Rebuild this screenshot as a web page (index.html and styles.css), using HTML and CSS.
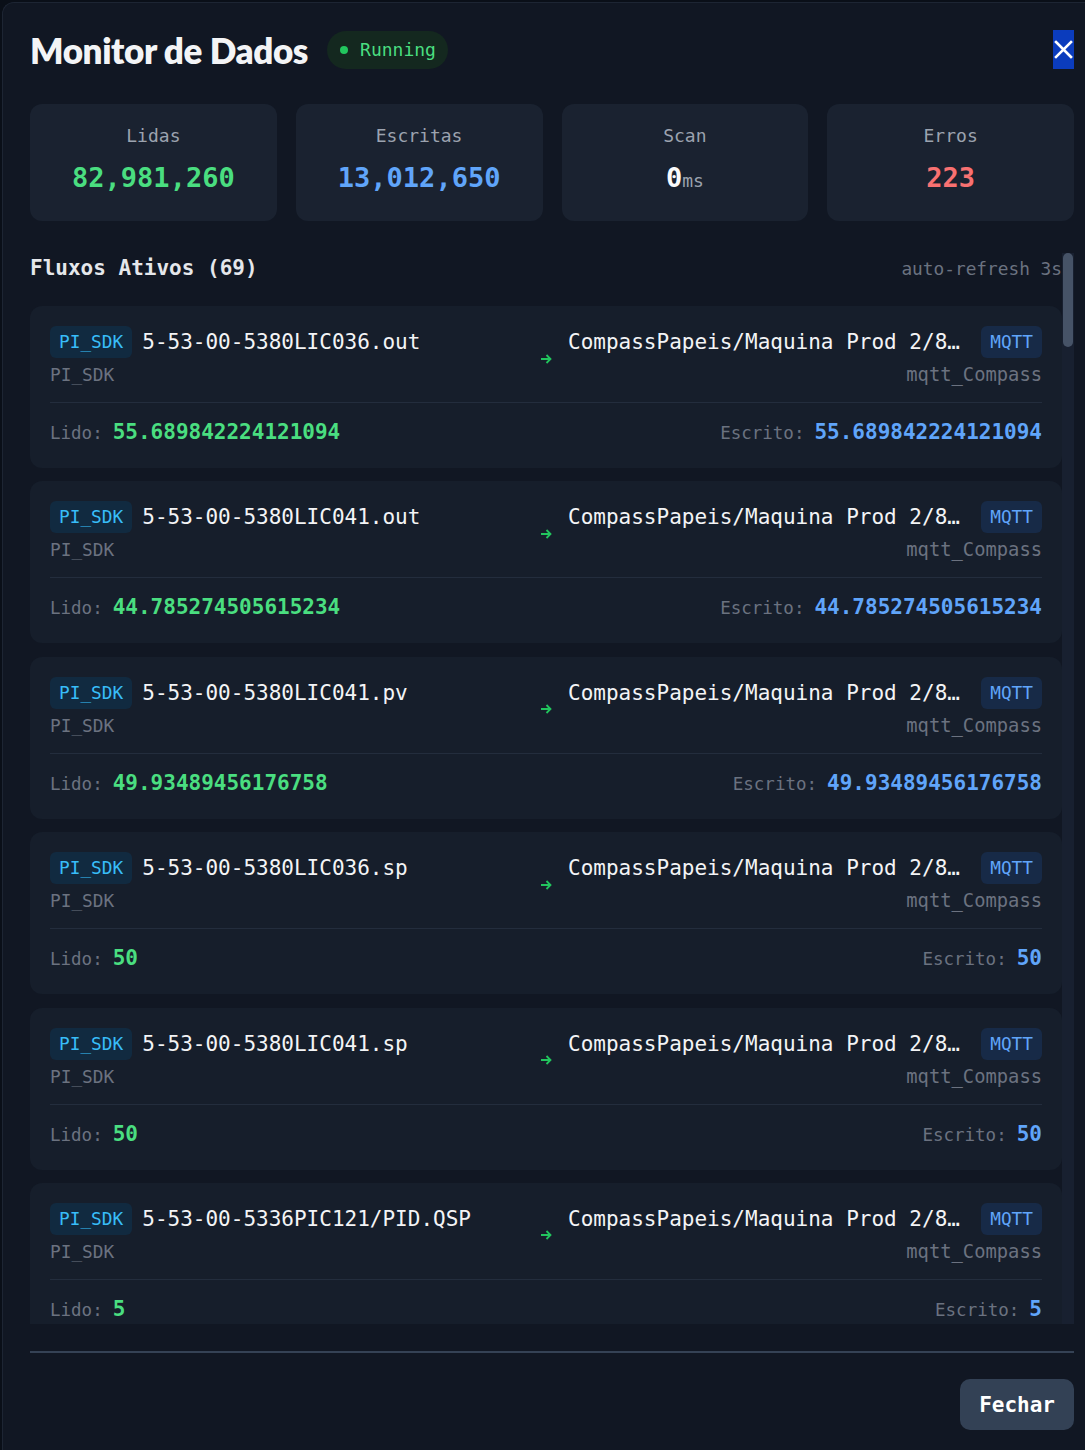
FILE: index.html
```html
<!DOCTYPE html>
<html lang="pt">
<head>
    <meta charset="UTF-8">
    <meta name="viewport" content="width=device-width, initial-scale=1.0">
    <title>Monitor de Dados</title>
    <link rel="stylesheet" href="styles.css">
</head>
<body>
    <div class="modal">
        <header class="modal-header">
            <h1>Monitor de Dados</h1>
            <span class="status"><span class="status-dot"></span>Running</span>
            <button class="close-button" aria-label="Fechar">
                <svg width="19" height="19" viewBox="0 0 19 19"><path d="M2 2 L17 17 M17 2 L2 17" stroke="#fff" stroke-width="2.6" stroke-linecap="square"/></svg>
            </button>
        </header>

        <div class="stats">
            <div class="stat">
                <p class="stat-label">Lidas</p>
                <p class="stat-value green" id="reads">82,981,260</p>
            </div>
            <div class="stat">
                <p class="stat-label">Escritas</p>
                <p class="stat-value blue" id="writes">13,012,650</p>
            </div>
            <div class="stat">
                <p class="stat-label">Scan</p>
                <p class="stat-value white" id="scan">0<span class="unit">ms</span></p>
            </div>
            <div class="stat">
                <p class="stat-label">Erros</p>
                <p class="stat-value red" id="errors">223</p>
            </div>
        </div>

        <div class="flows-area">
            <div class="flows" id="flows">
                <div class="flows-header">
                    <h2 id="flows-title">Fluxos Ativos (69)</h2>
                    <span class="refresh">auto-refresh 3s</span>
                </div>
                <div class="flow-list" id="flow-list"></div>
            </div>
            <div class="scrollbar"><div class="scroll-thumb" id="scroll-thumb"></div></div>
        </div>

        <footer class="modal-footer">
            <button class="footer-button">Fechar</button>
        </footer>
    </div>

    <script src="script.js"></script>
</body>
</html>
```

FILE: styles.css
```css
body {
    margin: 0;
    padding: 0;
    background-color: #0a0f18;
    font-family: "DejaVu Sans Mono", "Liberation Mono", monospace;
    color: #e5e7eb;
    overflow: hidden;
}

.modal {
    box-sizing: border-box;
    height: 1448px;
    margin: 2px 0 0 2px;
    padding: 27px 11px 20px 27px;
    background-color: #111723;
    border-top: 1px solid #1d2533;
    border-left: 1px solid #1d2533;
    border-radius: 12px 0 0 0;
}

.modal-header {
    display: flex;
    align-items: center;
    height: 39px;
    margin-bottom: 35px;
}

h1 {
    margin: 0;
    font-family: Lato, "Liberation Sans", sans-serif;
    font-weight: 800;
    font-size: 35px;
    letter-spacing: -0.4px;
    color: #f3f4f6;
}

.status {
    display: flex;
    align-items: center;
    gap: 12px;
    height: 38px;
    margin-left: 19px;
    padding: 0 12px 0 13px;
    border-radius: 19px;
    background-color: #14281f;
    color: #4ade80;
    font-size: 18px;
}

.status-dot {
    width: 8px;
    height: 8px;
    border-radius: 50%;
    background-color: #22c55e;
}

.close-button {
    display: flex;
    align-items: center;
    justify-content: center;
    width: 21px;
    height: 39px;
    margin-left: auto;
    padding: 0;
    border: none;
    background-color: #0b3cbd;
    cursor: pointer;
}

.stats {
    display: grid;
    grid-template-columns: repeat(4, 1fr);
    gap: 19px;
    margin-bottom: 32px;
}

.stat {
    padding: 20px 10px 22px;
    border-radius: 12px;
    background-color: #1a2230;
    text-align: center;
}

.stat-label {
    margin: 0;
    font-size: 18px;
    line-height: 24px;
    color: #9ca3af;
}

.stat-value {
    margin: 12px 0 0;
    font-size: 27px;
    line-height: 36px;
    font-weight: 700;
}

.unit {
    font-size: 18px;
    font-weight: 400;
    color: #9ca3af;
}

.green { color: #4ade80; }
.blue { color: #60a5fa; }
.red { color: #f87171; }
.white { color: #f9fafb; }

.flows-area {
    display: flex;
    height: 1071px;
}

.flows {
    flex: 1;
    min-width: 0;
    overflow-y: auto;
    scrollbar-width: none;
}

.scrollbar {
    width: 12px;
    background-color: #182030;
}

.scroll-thumb {
    height: 92px;
    margin: 0 1px;
    border-radius: 5px;
    background-color: #465367;
}

.flows-header {
    display: flex;
    justify-content: space-between;
    align-items: center;
    padding-top: 3px;
    margin-bottom: 26px;
}

h2 {
    margin: 0;
    font-size: 21px;
    line-height: 24px;
    font-weight: 700;
    color: #e5e7eb;
}

.refresh {
    font-size: 17.8px;
    color: #6b7280;
}

.flow-list {
    display: flex;
    flex-direction: column;
    gap: 13.4px;
}

.flow {
    padding: 20px 20px 22px;
    border-radius: 12px;
    background-color: #161e2b;
}

.flow-top {
    display: grid;
    grid-template-columns: 1fr auto 1fr;
    align-items: center;
    gap: 16px;
    padding-bottom: 14px;
    border-bottom: 1px solid #232d3d;
}

.end {
    min-width: 0;
}

.end-line {
    display: flex;
    align-items: center;
    gap: 10px;
    height: 32px;
}

.dst .end-line {
    justify-content: flex-end;
    gap: 20px;
}

.point {
    min-width: 0;
    overflow: hidden;
    white-space: nowrap;
    text-overflow: ellipsis;
    font-size: 21px;
    color: #f3f4f6;
}

.dst .point {
    flex: 1;
}

.tag {
    flex-shrink: 0;
    padding: 0 9px;
    border-radius: 6px;
    font-size: 17.8px;
    line-height: 32px;
}

.tag-pi {
    background-color: #112a40;
    color: #38bdf8;
}

.tag-mqtt {
    background-color: #172a47;
    color: #60a5fa;
}

.conn {
    margin-top: 4px;
    font-size: 17.8px;
    line-height: 26px;
    color: #6b7280;
}

.dst .conn {
    text-align: right;
    font-size: 18.8px;
}

.arrow {
    display: flex;
    width: 12px;
    margin-top: 3px;
}

.flow-values {
    display: flex;
    justify-content: space-between;
    height: 28px;
    margin-top: 15px;
}

.reading {
    display: flex;
    align-items: baseline;
    gap: 10px;
    height: 28px;
}

.label {
    font-size: 17.5px;
    line-height: 28px;
    color: #6b7280;
}

.value {
    font-size: 21px;
    line-height: 28px;
    font-weight: 700;
}

.modal-footer {
    display: flex;
    justify-content: flex-end;
    margin-top: 27px;
    padding-top: 26px;
    border-top: 2px solid #354255;
}

.footer-button {
    height: 51px;
    padding: 0 19px;
    border: none;
    border-radius: 10px;
    background-color: #334155;
    color: #ffffff;
    font-family: "DejaVu Sans Mono", "Liberation Mono", monospace;
    font-size: 21px;
    font-weight: 700;
    cursor: pointer;
}
```

FILE: script.js
```js
const topic = 'CompassPapeis/Maquina Prod 2/898cdb6b-4e1a-4c2f-9d3b-71a0e55c2f10';

const flows = [
    { source: '5-53-00-5380LIC036.out', read: '55.689842224121094', written: '55.689842224121094' },
    { source: '5-53-00-5380LIC041.out', read: '44.785274505615234', written: '44.785274505615234' },
    { source: '5-53-00-5380LIC041.pv', read: '49.93489456176758', written: '49.93489456176758' },
    { source: '5-53-00-5380LIC036.sp', read: '50', written: '50' },
    { source: '5-53-00-5380LIC041.sp', read: '50', written: '50' },
    { source: '5-53-00-5336PIC121/PID.QSP', read: '5', written: '5' }
];

// the rest of the 69 active flows
const extraTags = ['5336PIC121.pv', '5336PIC121.out', '5336FIC104.pv', '5336FIC104.sp', '5380TIC012.pv', '5380TIC012.out'];
while (flows.length < 69) {
    const i = flows.length;
    const value = (20 + (i * 7.37) % 60).toFixed(3);
    flows.push({ source: '5-53-00-' + extraTags[i % extraTags.length], read: value, written: value });
}

const arrow = '<svg width="12" height="10" viewBox="0 0 12 10"><path d="M1 5 H10.5 M6.5 1 L10.5 5 L6.5 9" fill="none" stroke="#22c55e" stroke-width="1.8"/></svg>';

const list = document.getElementById('flow-list');
list.innerHTML = flows.map(flow => `
    <div class="flow">
        <div class="flow-top">
            <div class="end src">
                <div class="end-line"><span class="tag tag-pi">PI_SDK</span><span class="point">${flow.source}</span></div>
                <div class="conn">PI_SDK</div>
            </div>
            <div class="arrow">${arrow}</div>
            <div class="end dst">
                <div class="end-line"><span class="point">${topic}</span><span class="tag tag-mqtt">MQTT</span></div>
                <div class="conn">mqtt_Compass</div>
            </div>
        </div>
        <div class="flow-values">
            <div class="reading"><span class="label">Lido:</span><span class="value green">${flow.read}</span></div>
            <div class="reading"><span class="label">Escrito:</span><span class="value blue">${flow.written}</span></div>
        </div>
    </div>`).join('');

document.getElementById('flows-title').textContent = `Fluxos Ativos (${flows.length})`;

// scroll thumb sized to the visible part of the list
const scroller = document.getElementById('flows');
const thumbHeight = scroller.clientHeight * scroller.clientHeight / scroller.scrollHeight;
document.getElementById('scroll-thumb').style.height = Math.round(thumbHeight) + 'px';
```
